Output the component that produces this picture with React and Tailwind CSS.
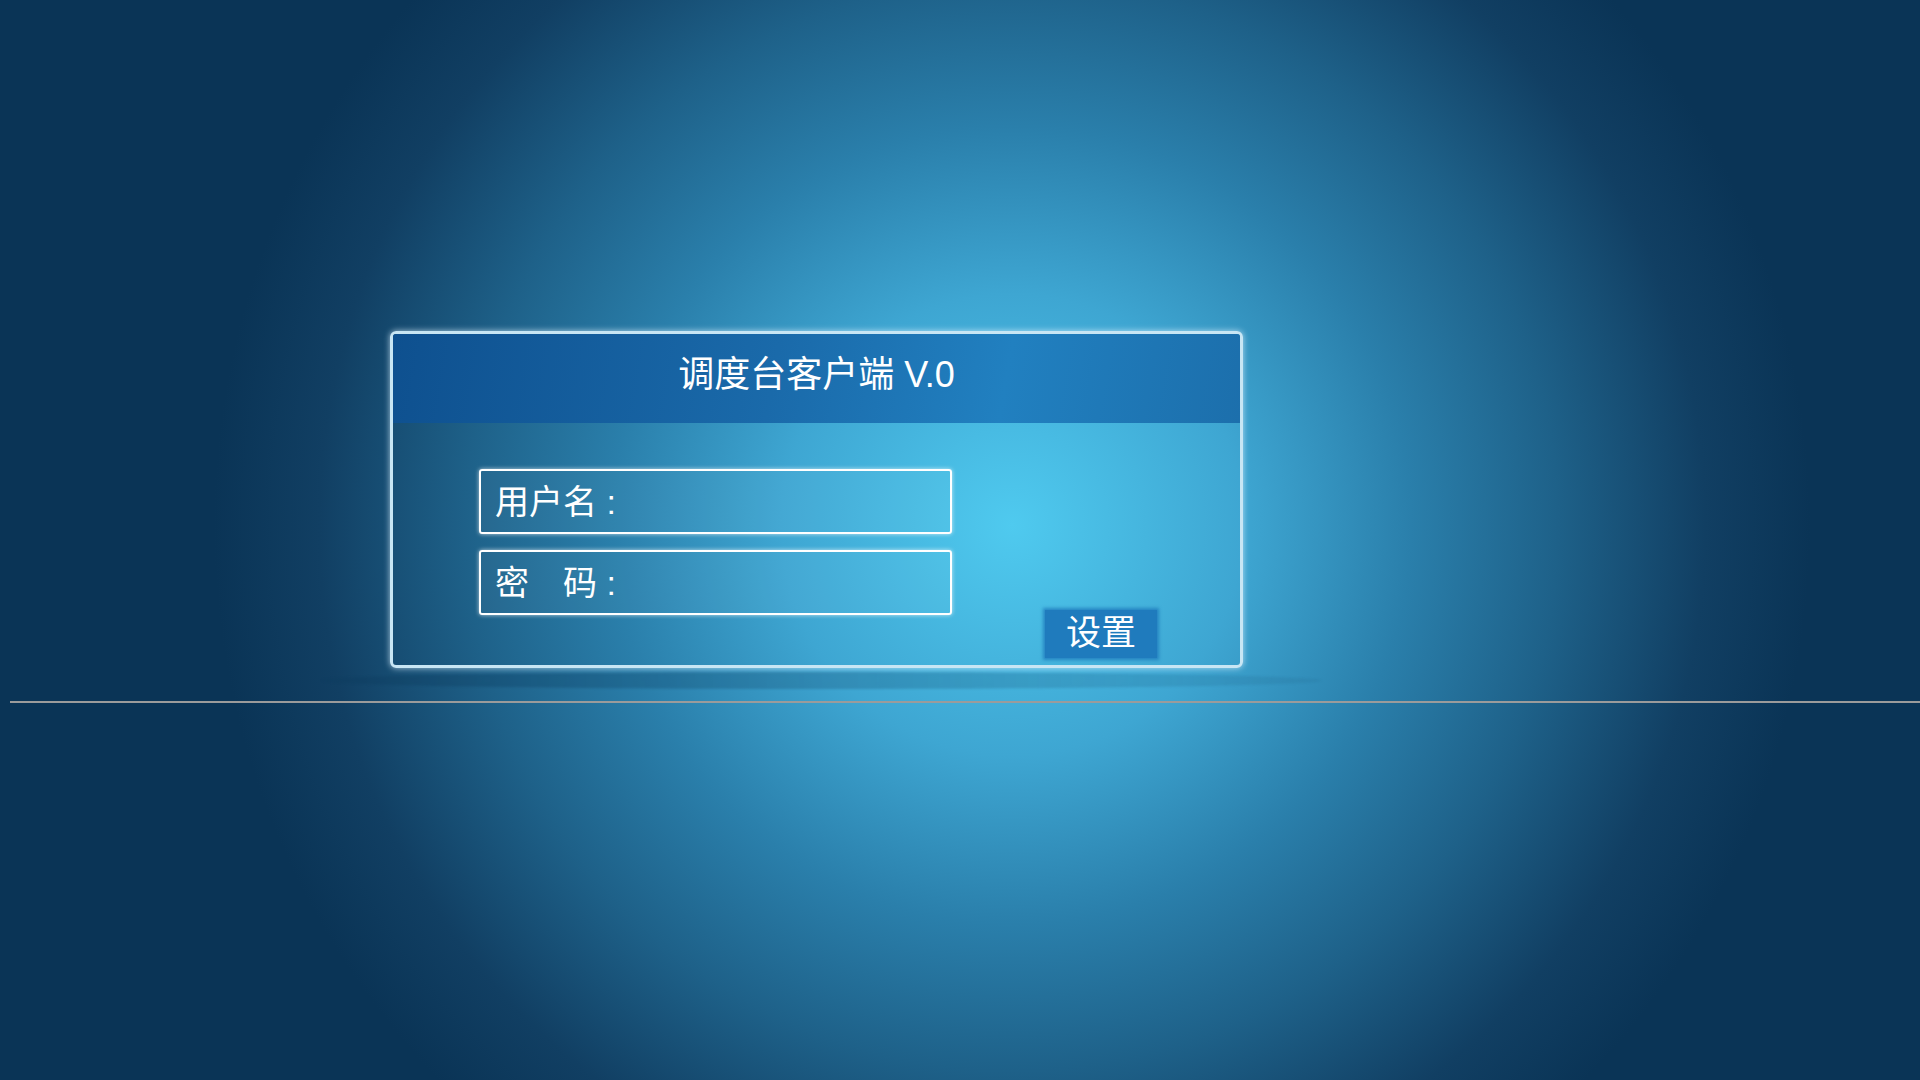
import React from 'react';

const FieldBox = ({ label }) => (
    <div className="flex items-center w-[473px] h-[65px] pl-[14px] border-2 border-white rounded-[3px] shadow-[0_0_4px_rgba(255,255,255,0.7)] bg-white/[0.03]">
        <span className="text-white text-[34px] leading-none">{label}</span>
    </div>
);

const App = () => {
    return (
        <div
            className="min-h-screen w-full flex flex-col overflow-hidden bg-[#0a3456] bg-[radial-gradient(circle_1050px_at_1012px_525px,#4fcaef_0%,#3ea6d2_22%,#2a7fab_38%,#1e6189_52%,#113f63_66%,#0a3456_76%,#0a3456_100%)]"
            style={{ fontFamily: '"Liberation Sans", "Noto Sans CJK SC", sans-serif' }}
        >
            <div className="pt-[331px] pl-[390px]">
                {/* login card */}
                <div className="w-[853px] h-[337px] flex flex-col border-[3px] border-[#c8e6f4] rounded-[6px] shadow-[0_0_6px_rgba(220,240,255,0.75)] overflow-hidden">
                    <div className="h-[89px] pb-[8px] flex items-center justify-center bg-[linear-gradient(100deg,#0e508f_0%,#1a6aaa_45%,#2180c0_72%,#1c6fac_100%)]">
                        <h1 className="text-white text-[36px] leading-none font-normal">调度台客户端 V.0</h1>
                    </div>
                    <div className="flex-1 flex">
                        <div className="ml-[86px] mt-[46px] flex flex-col gap-4">
                            <FieldBox label="用户名 :" />
                            <FieldBox label="密　码 :" />
                        </div>
                        <button className="ml-[93px] mt-[187px] w-[112px] h-[48px] pb-[3px] flex items-center justify-center bg-[#1f7bbd] text-white text-[35px] leading-none shadow-[0_0_3px_2px_rgba(31,123,189,0.8)]">
                            设置
                        </button>
                    </div>
                </div>
                {/* card shadow */}
                <div className="mt-[4px] -ml-[68px] w-[1000px] h-[17px] rounded-[50%] bg-[linear-gradient(90deg,rgba(12,60,95,0.35),rgba(12,60,95,0.22)_60%,rgba(12,60,95,0.08))] blur-[1px]" />
            </div>
            <div className="mt-[12px] ml-[10px] h-[2px] bg-[#9b9b9b]" />
        </div>
    );
};

export default App;
